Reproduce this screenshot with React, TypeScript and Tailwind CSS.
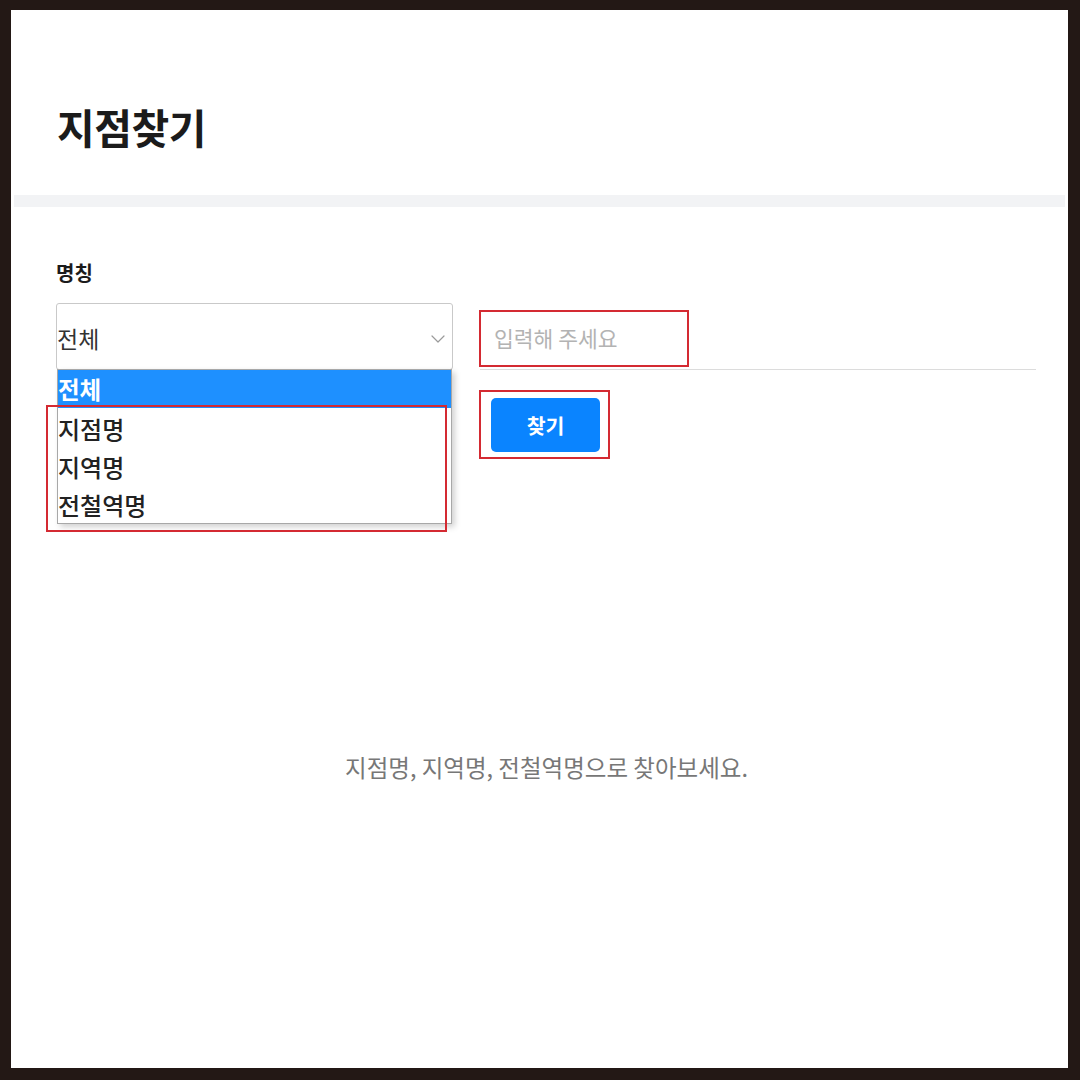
import { ChevronDown } from "lucide-react";

const font = { fontFamily: '"Noto Sans CJK KR", "Noto Sans", sans-serif' };

function App() {
  const options = ["전체", "지점명", "지역명", "전철역명"];

  return (
    <div
      style={font}
      className="w-[1080px] h-[1080px] bg-[#231815] pl-[11px] pt-[10px] pr-[12px] pb-[12px]"
    >
      <div className="w-full h-full bg-white flex flex-col">
        {/* title */}
        <div className="h-[185px] flex items-center pl-[46px] pt-[48px]">
          <h1 className="text-[41px] font-bold text-[#1b1b1b] tracking-[-0.5px]">지점찾기</h1>
        </div>
        <div className="h-[12px] bg-[#f2f3f5] ml-[3px] mr-[3px]" />

        {/* search form */}
        <div className="pl-[45px] pr-[32px] pt-[53px]">
          <p className="text-[20px] font-bold text-[#1b1b1b] leading-[26px]">명칭</p>

          <div className="flex mt-[17px]">
            <div className="relative w-[397px] shrink-0">
              <div className="h-[67px] border border-[#c9c9c9] rounded-[3px] flex items-center justify-between pr-[2px] pt-[4px]">
                <span className="text-[23px] text-[#333] leading-none">전체</span>
                <ChevronDown className="w-[24px] h-[24px] text-[#9a9a9a]" strokeWidth={1.2} />
              </div>

              <ul className="absolute left-[1px] top-[66px] w-[395px] bg-white border border-[#a8a8a8] shadow-[3px_3px_6px_rgba(0,0,0,0.18)] z-10">
                {options.map((o, i) => (
                  <li
                    key={o}
                    className={
                      i === 0
                        ? "h-[38px] flex items-center bg-[#1e90ff] text-white font-bold text-[23.5px] pt-[2px]"
                        : "h-[38.3px] flex items-center text-[#222] font-medium text-[24px] pt-[3px]"
                    }
                  >
                    {o}
                  </li>
                ))}
              </ul>

              {/* highlight box */}
              <div className="absolute left-[-10px] top-[102px] w-[401px] h-[127px] border-2 border-[#d42a32] z-20 pointer-events-none" />
            </div>

            <div className="ml-[27px] flex-1">
              <div className="relative h-[67px] border-b border-[#dcdcdc] flex items-center pl-[14px] pt-[4px]">
                <input
                  placeholder="입력해 주세요"
                  className="w-full outline-none text-[21.5px] placeholder:text-[#b3b3b3] bg-transparent"
                  style={font}
                />
                <div className="absolute left-[-1px] top-[7px] w-[210px] h-[57px] border-2 border-[#d42a32] pointer-events-none" />
              </div>

              <div className="relative mt-[28px] ml-[11px] w-[109px]">
                <button className="w-[109px] h-[54px] rounded-[5px] bg-[#0a84ff] text-white text-[20.5px] font-bold">
                  찾기
                </button>
                <div className="absolute left-[-12px] top-[-8px] w-[131px] h-[69px] border-2 border-[#d42a32] pointer-events-none" />
              </div>
            </div>
          </div>
        </div>

        <p className="mt-[298px] text-center text-[23.5px] text-[#777] pl-[14px]">
          지점명, 지역명, 전철역명으로 찾아보세요.
        </p>
      </div>
    </div>
  );
}

export default App;
